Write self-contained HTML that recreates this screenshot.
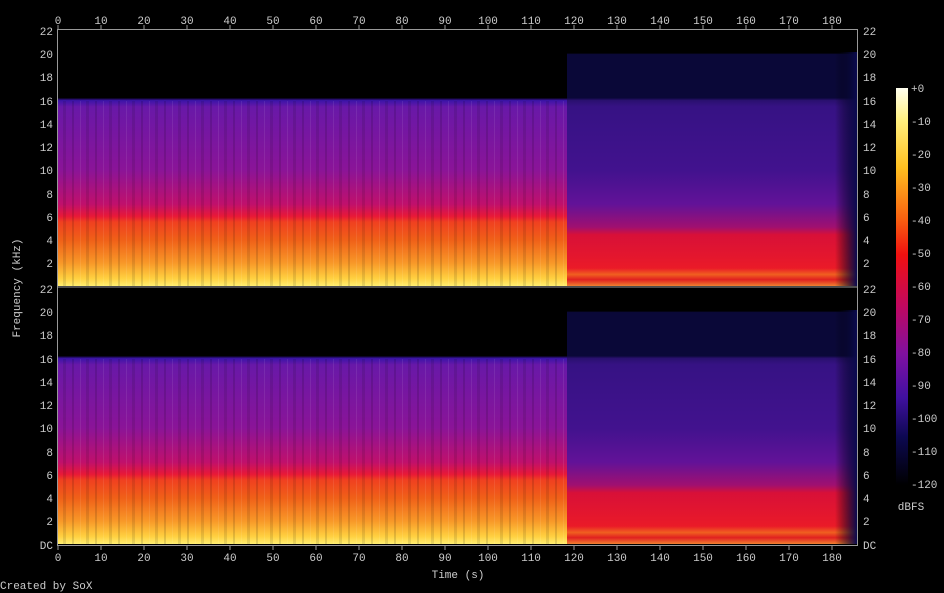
<!DOCTYPE html>
<html><head><meta charset="utf-8"><style>
html,body{margin:0;padding:0;background:#000;width:944px;height:593px;overflow:hidden}
svg text{font-family:"Liberation Mono","DejaVu Sans Mono",monospace;font-size:11px;fill:#ccc}
</style></head><body>
<svg width="944" height="593" xmlns="http://www.w3.org/2000/svg">
<defs>
<linearGradient id="L" x1="0" y1="0" x2="0" y2="1">
<stop offset="0" stop-color="#000"/>
<stop offset="0.265" stop-color="#000"/>
<stop offset="0.275" stop-color="#3a14a8"/>
<stop offset="0.30" stop-color="#6818a8"/>
<stop offset="0.545" stop-color="#8a1498"/>
<stop offset="0.68" stop-color="#c0106c"/>
<stop offset="0.727" stop-color="#e81838"/>
<stop offset="0.75" stop-color="#f04020"/>
<stop offset="0.82" stop-color="#f06018"/>
<stop offset="0.91" stop-color="#f89828"/>
<stop offset="0.97" stop-color="#ffd040"/>
<stop offset="1" stop-color="#ffee70"/>
</linearGradient>
<linearGradient id="R" x1="0" y1="0" x2="0" y2="1">
<stop offset="0" stop-color="#000"/>
<stop offset="0.09" stop-color="#000"/>
<stop offset="0.095" stop-color="#0a0838"/>
<stop offset="0.265" stop-color="#0a0838"/>
<stop offset="0.275" stop-color="#2a1070"/>
<stop offset="0.30" stop-color="#361284"/>
<stop offset="0.55" stop-color="#42128e"/>
<stop offset="0.68" stop-color="#621298"/>
<stop offset="0.77" stop-color="#a01070"/>
<stop offset="0.80" stop-color="#d81038"/>
<stop offset="0.93" stop-color="#ea1a28"/>
<stop offset="0.955" stop-color="#f06020"/>
<stop offset="0.975" stop-color="#e02020"/>
<stop offset="1" stop-color="#f08030"/>
</linearGradient>
<linearGradient id="E" x1="0" y1="0" x2="1" y2="0">
<stop offset="0" stop-color="#000" stop-opacity="0"/>
<stop offset="1" stop-color="#0a0a50" stop-opacity="1"/>
</linearGradient>
<linearGradient id="C" x1="0" y1="0" x2="0" y2="1">
<stop offset="0" stop-color="#fffff0"/>
<stop offset="0.08" stop-color="#fff080"/>
<stop offset="0.2" stop-color="#ffc020"/>
<stop offset="0.33" stop-color="#f86010"/>
<stop offset="0.42" stop-color="#f01010"/>
<stop offset="0.55" stop-color="#c00860"/>
<stop offset="0.67" stop-color="#8010a0"/>
<stop offset="0.78" stop-color="#4010a0"/>
<stop offset="0.88" stop-color="#0c0850"/>
<stop offset="1" stop-color="#000"/>
</linearGradient>
<pattern id="S" width="23" height="10" patternUnits="userSpaceOnUse">
<rect x="3" y="0" width="2" height="10" fill="#000" opacity="0.12"/>
<rect x="11" y="0" width="1" height="10" fill="#fff" opacity="0.08"/>
<rect x="17" y="0" width="3" height="10" fill="#000" opacity="0.1"/>
</pattern>
</defs>
<rect x="58" y="30" width="509" height="256" fill="url(#L)"/>
<rect x="58" y="101" width="509" height="185" fill="url(#S)"/>
<rect x="567" y="30" width="290" height="256" fill="url(#R)"/>
<rect x="835" y="52" width="22" height="234" fill="url(#E)"/>
<rect x="58" y="288" width="509" height="256" fill="url(#L)"/>
<rect x="58" y="359" width="509" height="185" fill="url(#S)"/>
<rect x="567" y="288" width="290" height="256" fill="url(#R)"/>
<rect x="835" y="310" width="22" height="234" fill="url(#E)"/>
<rect x="57.5" y="29.5" width="800" height="516" fill="none" stroke="#999" stroke-width="1"/>
<line x1="57" y1="287" x2="858" y2="287" stroke="#999"/>
<g stroke="#999">
<path d="M58 25v4M101 25v4M144 25v4M187 25v4M230 25v4M273 25v4M316 25v4M359 25v4M402 25v4M445 25v4M488 25v4M531 25v4M574 25v4M617 25v4M660 25v4M703 25v4M746 25v4M789 25v4M832 25v4"/>
<path d="M58 546v4M101 546v4M144 546v4M187 546v4M230 546v4M273 546v4M316 546v4M359 546v4M402 546v4M445 546v4M488 546v4M531 546v4M574 546v4M617 546v4M660 546v4M703 546v4M746 546v4M789 546v4M832 546v4"/>
</g>
<g text-anchor="middle">
<text x="58" y="24">0</text><text x="101" y="24">10</text><text x="144" y="24">20</text><text x="187" y="24">30</text><text x="230" y="24">40</text><text x="273" y="24">50</text><text x="316" y="24">60</text><text x="359" y="24">70</text><text x="402" y="24">80</text><text x="445" y="24">90</text><text x="488" y="24">100</text><text x="531" y="24">110</text><text x="574" y="24">120</text><text x="617" y="24">130</text><text x="660" y="24">140</text><text x="703" y="24">150</text><text x="746" y="24">160</text><text x="789" y="24">170</text><text x="832" y="24">180</text>
<text x="58" y="561">0</text><text x="101" y="561">10</text><text x="144" y="561">20</text><text x="187" y="561">30</text><text x="230" y="561">40</text><text x="273" y="561">50</text><text x="316" y="561">60</text><text x="359" y="561">70</text><text x="402" y="561">80</text><text x="445" y="561">90</text><text x="488" y="561">100</text><text x="531" y="561">110</text><text x="574" y="561">120</text><text x="617" y="561">130</text><text x="660" y="561">140</text><text x="703" y="561">150</text><text x="746" y="561">160</text><text x="789" y="561">170</text><text x="832" y="561">180</text>
<text x="458" y="578">Time (s)</text>
<text x="911" y="510">dBFS</text>
</g>
<g text-anchor="end">
<text x="53" y="35">22</text><text x="53" y="58">20</text><text x="53" y="81">18</text><text x="53" y="105">16</text><text x="53" y="128">14</text><text x="53" y="151">12</text><text x="53" y="174">10</text><text x="53" y="198">8</text><text x="53" y="221">6</text><text x="53" y="244">4</text><text x="53" y="267">2</text>
<text x="53" y="293">22</text><text x="53" y="316">20</text><text x="53" y="339">18</text><text x="53" y="363">16</text><text x="53" y="386">14</text><text x="53" y="409">12</text><text x="53" y="432">10</text><text x="53" y="456">8</text><text x="53" y="479">6</text><text x="53" y="502">4</text><text x="53" y="525">2</text><text x="53" y="549">DC</text>
</g>
<g>
<text x="863" y="35">22</text><text x="863" y="58">20</text><text x="863" y="81">18</text><text x="863" y="105">16</text><text x="863" y="128">14</text><text x="863" y="151">12</text><text x="863" y="174">10</text><text x="863" y="198">8</text><text x="863" y="221">6</text><text x="863" y="244">4</text><text x="863" y="267">2</text>
<text x="863" y="293">22</text><text x="863" y="316">20</text><text x="863" y="339">18</text><text x="863" y="363">16</text><text x="863" y="386">14</text><text x="863" y="409">12</text><text x="863" y="432">10</text><text x="863" y="456">8</text><text x="863" y="479">6</text><text x="863" y="502">4</text><text x="863" y="525">2</text><text x="863" y="549">DC</text>
</g>
<text x="20" y="288" transform="rotate(-90 20 288)" text-anchor="middle">Frequency (kHz)</text>
<rect x="896" y="88" width="12" height="397" fill="url(#C)"/>
<g>
<text x="911" y="92">+0</text><text x="911" y="125">-10</text><text x="911" y="158">-20</text><text x="911" y="191">-30</text><text x="911" y="224">-40</text><text x="911" y="257">-50</text><text x="911" y="290">-60</text><text x="911" y="323">-70</text><text x="911" y="356">-80</text><text x="911" y="389">-90</text><text x="911" y="422">-100</text><text x="911" y="455">-110</text><text x="911" y="488">-120</text>
</g>
<text x="0" y="589">Created by SoX</text>
</svg>
</body></html>
